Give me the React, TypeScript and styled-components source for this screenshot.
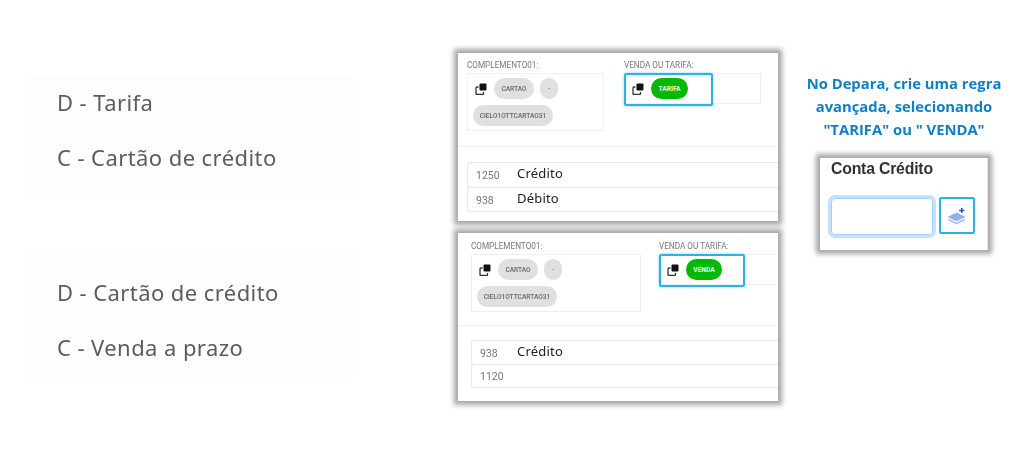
import React from "react";
import styled, { createGlobalStyle } from "styled-components";

const Global = createGlobalStyle`
  html, body { margin: 0; padding: 0; background: #fff; }
  body { width: 1024px; height: 450px; overflow: hidden; font-family: "Roboto", "Liberation Sans", sans-serif; }
  * { box-sizing: border-box; }
`;

const Page = styled.div`
  display: flex;
  align-items: flex-start;
  width: 1024px;
  height: 450px;
`;

const LeftColumn = styled.div`
  display: flex;
  flex-direction: column;
  align-items: flex-end;
  gap: 52px;
  width: 353px;
  margin-top: 76px;
`;

const NoteBlock = styled.div<{ $w: number; $h: number; $top: number; $pad: number }>`
  display: flex;
  flex-direction: column;
  gap: 27px;
  width: ${(p) => p.$w}px;
  height: ${(p) => p.$h}px;
  padding: ${(p) => p.$top}px 0 0 ${(p) => p.$pad}px;
  background: #fdfdfd;
`;

const NoteLine = styled.div`
  font-family: "Noto Sans", sans-serif;
  font-size: 22px;
  line-height: 28px;
  letter-spacing: 0.42px;
  color: #5c5c5c;
  white-space: nowrap;
  filter: blur(0.2px);
`;

const MiddleColumn = styled.div`
  display: flex;
  flex-direction: column;
  gap: 12px;
  width: 320px;
  margin: 53px 0 0 105px;
`;

const Panel = styled.section<{ $left: number; $top: number }>`
  position: relative;
  width: 320px;
  height: 168px;
  padding: ${(p) => p.$top}px 0 0 ${(p) => p.$left}px;
  background: #fff;
  box-shadow: 0 0 5px 4px #a6a6a6;
  overflow: hidden;
  filter: blur(0.35px);
`;

const PickerRow = styled.div<{ $gap: number }>`
  display: flex;
  align-items: flex-start;
  gap: ${(p) => p.$gap}px;
  height: 85px;
`;

const Picker = styled.div<{ $w: number }>`
  flex: none;
  width: ${(p) => p.$w}px;
`;

const FieldLabel = styled.div`
  height: 12px;
  font-size: 8.2px;
  line-height: 9px;
  color: #777;
  white-space: nowrap;
`;

const TagBox = styled.div`
  position: relative;
  display: flex;
  flex-wrap: wrap;
  align-items: center;
  align-content: flex-start;
  gap: 6px;
  padding: 4px 6px 4px 5px;
  border: 1px solid #f0f0f0;
`;

const Highlight = styled.div<{ $w: number }>`
  position: absolute;
  left: -1px;
  top: -1px;
  width: ${(p) => p.$w}px;
  height: 33px;
  border: 2px solid #2ab2e6;
  border-radius: 2px;
  box-shadow: 0 0 3px #7fd0f0;
  pointer-events: none;
`;

const CopyWrap = styled.span`
  display: inline-flex;
  flex: none;
  width: 12px;
  margin: 1px 1px 0 2px;
`;

const Chip = styled.span<{ $w: number; $green?: boolean }>`
  display: inline-flex;
  align-items: center;
  justify-content: center;
  width: ${(p) => p.$w}px;
  height: 21px;
  border-radius: 11px;
  background: ${(p) => (p.$green ? "#00b900" : "#e0e0e0")};
  color: ${(p) => (p.$green ? "#e9ffe9" : "#666")};
  font-size: 6.6px;
  font-weight: ${(p) => (p.$green ? 700 : 500)};
  white-space: nowrap;
`;

const Divider = styled.hr<{ $top: number }>`
  position: absolute;
  left: 0;
  right: 0;
  top: ${(p) => p.$top}px;
  margin: 0;
  border: 0;
  border-top: 1px solid #f0f0f0;
`;

const RowList = styled.div<{ $top: number }>`
  display: flex;
  flex-direction: column;
  margin-top: ${(p) => p.$top}px;
`;

const AccountRow = styled.div<{ $h: number }>`
  display: flex;
  align-items: center;
  height: ${(p) => p.$h}px;
  border: 1px solid #e6e8ee;
  border-right: 0;
  border-radius: 3px 0 0 3px;
  margin-top: -1px;
`;

const AccountNumber = styled.span<{ $w: number }>`
  width: ${(p) => p.$w}px;
  padding: 2px 0 0 8px;
  font-size: 10.5px;
  color: #777;
`;

const AccountName = styled.span`
  margin-top: -3px;
  font-family: "Noto Sans", sans-serif;
  font-size: 13px;
  letter-spacing: 0.2px;
  color: #222;
`;

const RightColumn = styled.div`
  display: flex;
  flex-direction: column;
  align-items: center;
  width: 196px;
  margin: 72px 0 0 28px;
`;

const Callout = styled.p`
  width: 200px;
  height: 73px;
  margin: 0 0 13px;
  flex: none;
  font-family: "Open Sans", sans-serif;
  font-size: 14.8px;
  font-weight: 700;
  line-height: 23px;
  text-align: center;
  color: #0f7fc4;
  filter: blur(0.2px);
`;

const CreditCard = styled.section`
  align-self: flex-start;
  width: 168px;
  height: 92px;
  margin-left: 14px;
  padding: 1px 0 0 11px;
  background: #fff;
  border-right: 1px solid #e4e4e4;
  box-shadow: 0 0 5px 4px #a6a6a6;
  filter: blur(0.35px);
`;

const CreditTitle = styled.div`
  height: 38px;
  font-family: "Liberation Sans", sans-serif;
  font-size: 15.8px;
  font-weight: 700;
  line-height: 19px;
  letter-spacing: -0.2px;
  color: #333;
`;

const InputRow = styled.div`
  display: flex;
  align-items: flex-start;
  gap: 6px;
`;

const CreditInput = styled.div`
  width: 102px;
  height: 37px;
  margin-top: 1px;
  border: 1px solid #9fd0f7;
  border-radius: 4px;
  box-shadow: 0 0 0 3px #c4e1fb;
`;

const LayerButton = styled.div`
  display: flex;
  align-items: center;
  justify-content: center;
  width: 36px;
  height: 37px;
  border: 2px solid #2ab2e6;
  border-radius: 2px;
`;

function CopyIcon() {
  return (
    <svg width="12" height="12" viewBox="0 0 12 12">
      <path
        d="M3.5 4H2a1 1 0 0 0-1 1v5.5a1 1 0 0 0 1 1h5.5a1 1 0 0 0 1-1V9"
        fill="none"
        stroke="#333"
        strokeWidth="1.3"
      />
      <rect x="4.5" y="0.5" width="7" height="7" rx="1" fill="#111" />
    </svg>
  );
}

function LayersPlusIcon() {
  return (
    <svg width="20" height="20" viewBox="0 0 20 20">
      <path d="M9.5 6.5 18.5 11l-9 4.3L0.5 11z" fill="#8fb0ea" />
      <path d="M2.4 13 9.5 16.4 16.6 13l1.9 1-9 4.6-9-4.6z" fill="#a5c0ef" />
      <path d="M14 2h1.5v1.8h1.8v1.5h-1.8v1.8H14V5.3h-1.8V3.8H14z" fill="#2450c4" />
    </svg>
  );
}

type Data = {
  left: number; top: number; gap: number; firstW: number; secondW: number; highlightW: number;
  chipLabel: string; chipW: number; listTop: number; dividerTop: number; numberW: number; rowH: number;
  rows: { n: string; name: string }[];
};

const panels: Data[] = [
  { left: 9, top: 8, gap: 20, firstW: 137, secondW: 137, highlightW: 89, chipLabel: "TARIFA", chipW: 37, listTop: 17, dividerTop: 93, numberW: 49, rowH: 25.5,
    rows: [{ n: "1250", name: "Crédito" }, { n: "938", name: "Débito" }] },
  { left: 13, top: 9, gap: 18, firstW: 170, secondW: 137, highlightW: 86, chipLabel: "VENDA", chipW: 36, listTop: 14, dividerTop: 92, numberW: 45, rowH: 24.5,
    rows: [{ n: "938", name: "Crédito" }, { n: "1120", name: "" }] },
];

function ScreenPanel({ d }: { d: Data }) {
  return (
    <Panel $left={d.left} $top={d.top}>
      <PickerRow $gap={d.gap}>
        <Picker $w={d.firstW}>
          <FieldLabel>COMPLEMENTO01:</FieldLabel>
          <TagBox>
            <CopyWrap><CopyIcon /></CopyWrap>
            <Chip $w={40}>CARTAO</Chip>
            <Chip $w={18}>-</Chip>
            <Chip $w={80}>CIELO1OTTCARTAO31</Chip>
          </TagBox>
        </Picker>
        <Picker $w={d.secondW}>
          <FieldLabel>VENDA OU TARIFA:</FieldLabel>
          <TagBox>
            <CopyWrap><CopyIcon /></CopyWrap>
            <Chip $w={d.chipW} $green>{d.chipLabel}</Chip>
            <Highlight $w={d.highlightW} />
          </TagBox>
        </Picker>
      </PickerRow>
      <Divider $top={d.dividerTop} />
      <RowList $top={d.listTop}>
        {d.rows.map((r) => (
          <AccountRow key={r.n} $h={d.rowH}>
            <AccountNumber $w={d.numberW}>{r.n}</AccountNumber>
            {r.name && <AccountName>{r.name}</AccountName>}
          </AccountRow>
        ))}
      </RowList>
    </Panel>
  );
}

export default function App() {
  return (
    <>
      <Global />
      <Page>
        <LeftColumn>
          <NoteBlock $w={323} $h={122} $top={12} $pad={27}>
            <NoteLine>D - Tarifa</NoteLine>
            <NoteLine>C - Cartão de crédito</NoteLine>
          </NoteBlock>
          <NoteBlock $w={328} $h={128} $top={28} $pad={32}>
            <NoteLine>D - Cartão de crédito</NoteLine>
            <NoteLine>C - Venda a prazo</NoteLine>
          </NoteBlock>
        </LeftColumn>
        <MiddleColumn>
          {panels.map((d) => <ScreenPanel key={d.chipLabel} d={d} />)}
        </MiddleColumn>
        <RightColumn>
          <Callout>
            No Depara, crie uma regra avançada, selecionando "TARIFA" ou " VENDA"
          </Callout>
          <CreditCard>
            <CreditTitle>Conta Crédito</CreditTitle>
            <InputRow>
              <CreditInput />
              <LayerButton><LayersPlusIcon /></LayerButton>
            </InputRow>
          </CreditCard>
        </RightColumn>
      </Page>
    </>
  );
}
